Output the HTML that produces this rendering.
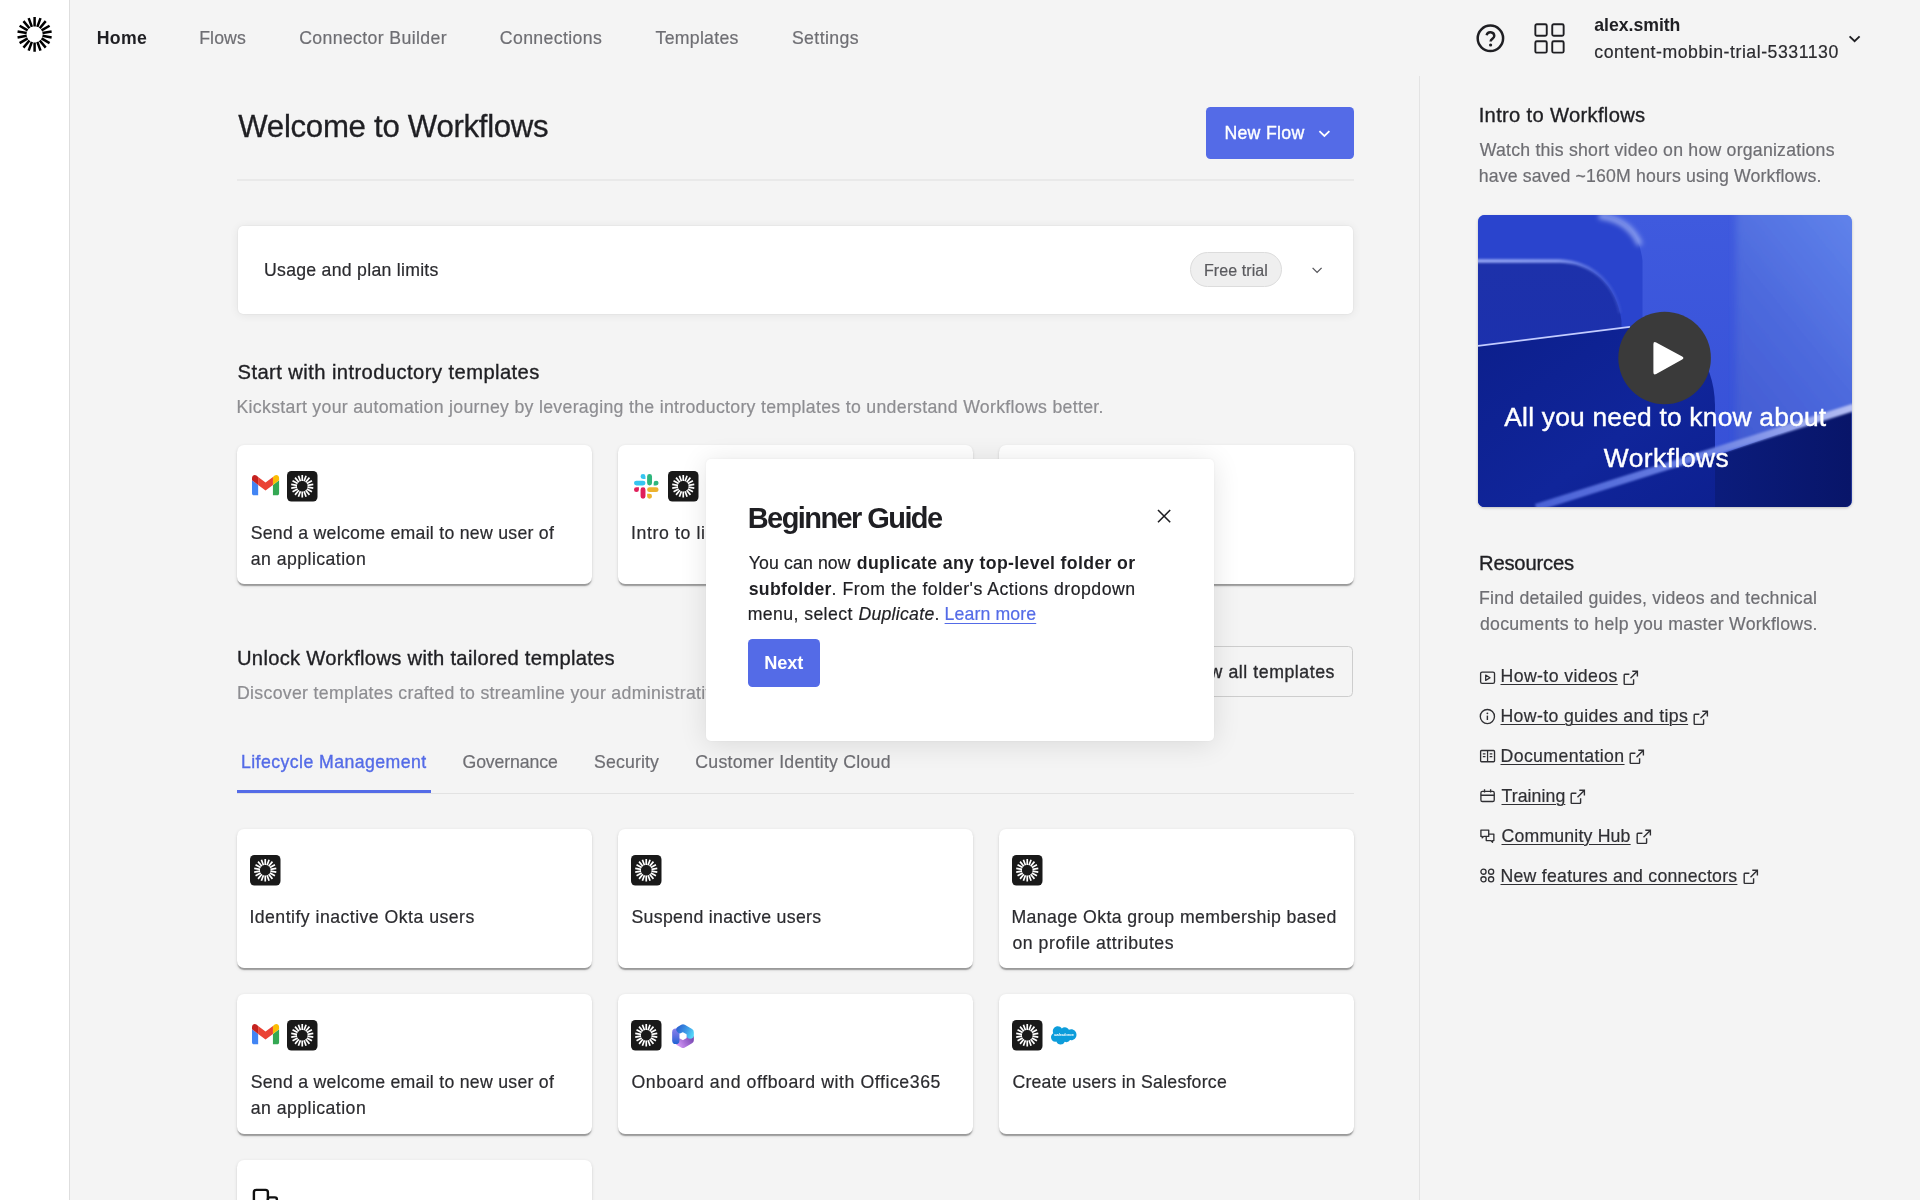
<!DOCTYPE html>
<html lang="en"><head><meta charset="utf-8"><title>Workflows</title>
<style>
*{box-sizing:border-box}html,body{margin:0;padding:0}
body{width:1920px;height:1200px;overflow:hidden;background:#f4f4f4;font-family:"Liberation Sans", sans-serif;position:relative}
.t{position:absolute;white-space:nowrap;line-height:1;display:block}
.t>i{display:inline-block;width:0;height:40px}
#root{position:absolute;left:0;top:0;width:1920px;height:1200px;overflow:hidden;will-change:transform}
.i{position:absolute;display:block;overflow:visible}
.b{position:absolute}
.card{position:absolute;background:#fff;border-radius:7.2px;box-shadow:0 2.4px 1.2px -1.2px rgba(0,0,0,.2),0 1.2px 1.2px rgba(0,0,0,.14),0 1.2px 3.6px rgba(0,0,0,.12)}
</style></head><body><div id="root">
<div class="b" style="left:0;top:0;width:70px;height:1200px;background:#fff;border-right:1.5px solid #dedede"></div>
<div class="b" style="left:1418.6px;top:76px;width:1.5px;height:1124px;background:#e3e3e3"></div>
<div class="b" style="left:237px;top:179.4px;width:1116.5px;height:2px;background:#e9e9e9"></div>
<div class="b" style="left:1205.9px;top:106.5px;width:147.7px;height:52.2px;background:#546be7;border-radius:4.5px"></div>
<div class="b" style="left:237.5px;top:225.5px;width:1115.5px;height:88.7px;background:#fff;border-radius:5px;box-shadow:0 0 1.5px rgba(0,0,0,.13),0 1px 10px rgba(0,0,0,.075)"></div>
<div class="b" style="left:1190px;top:252.1px;width:91.5px;height:35.2px;background:#efefef;border:1px solid #dcdcdc;border-radius:18px"></div>
<div class="card" style="left:236.8px;top:444.9px;width:355.2px;height:139.2px"></div>
<div class="card" style="left:236.8px;top:829.2px;width:355.2px;height:138.9px"></div>
<div class="card" style="left:236.8px;top:994.4px;width:355.2px;height:139.6px"></div>
<div class="card" style="left:617.8px;top:444.9px;width:355.2px;height:139.2px"></div>
<div class="card" style="left:617.8px;top:829.2px;width:355.2px;height:138.9px"></div>
<div class="card" style="left:617.8px;top:994.4px;width:355.2px;height:139.6px"></div>
<div class="card" style="left:998.8px;top:444.9px;width:355.2px;height:139.2px"></div>
<div class="card" style="left:998.8px;top:829.2px;width:355.2px;height:138.9px"></div>
<div class="card" style="left:998.8px;top:994.4px;width:355.2px;height:139.6px"></div>
<div class="card" style="left:236.8px;top:1160px;width:355.2px;height:120px"></div>
<div class="b" style="left:1166px;top:646.4px;width:187.4px;height:51px;border:1.3px solid #cdcdcd;border-radius:4.5px"></div>
<div class="b" style="left:237px;top:792.6px;width:1116.5px;height:1.2px;background:#e2e2e2"></div>
<div class="b" style="left:237px;top:790.4px;width:194px;height:2.8px;background:#546be7"></div>
<svg class="i" style="left:1478.4px;top:214.5px;overflow:hidden;border-radius:6.5px;box-shadow:0 1px 3px rgba(0,0,0,.22);" width="373.6" height="292.2" viewBox="0 0 373.6 292.2">
<defs>
<linearGradient id="vbg" x1="0" y1="0" x2="0" y2="1"><stop offset="0" stop-color="#3f5ade"/><stop offset="1" stop-color="#354fd6"/></linearGradient>
<linearGradient id="vr" x1="0.3" y1="1" x2="0.8" y2="0"><stop offset="0" stop-color="#3f58d0"/><stop offset="0.5" stop-color="#4c68dc"/><stop offset="1" stop-color="#5f82ea"/></linearGradient>
<linearGradient id="vin" x1="0" y1="0" x2="0" y2="1"><stop offset="0" stop-color="#1d31aa"/><stop offset="1" stop-color="#1a30b2"/></linearGradient>
<linearGradient id="vnavy" x1="0" y1="0" x2="1" y2="1"><stop offset="0" stop-color="#0c1f8c"/><stop offset="0.6" stop-color="#10259a"/><stop offset="1" stop-color="#0d2090"/></linearGradient>
<linearGradient id="vbot" x1="0" y1="0" x2="1" y2="0"><stop offset="0" stop-color="#0b1c7c"/><stop offset="1" stop-color="#081569"/></linearGradient>
<linearGradient id="vhl" gradientUnits="userSpaceOnUse" x1="0" y1="0" x2="145" y2="0"><stop offset="0" stop-color="#97a8f4"/><stop offset="0.55" stop-color="#8497ee"/><stop offset="1" stop-color="#4a62d8" stop-opacity=".3"/></linearGradient>
<linearGradient id="vband" gradientUnits="userSpaceOnUse" x1="60" y1="0" x2="374" y2="0"><stop offset="0" stop-color="#4a62d6"/><stop offset="0.55" stop-color="#6c82e4"/><stop offset="1" stop-color="#b4bef4"/></linearGradient>
<filter id="bl1" x="-20%" y="-20%" width="140%" height="140%"><feGaussianBlur stdDeviation="1.1"/></filter>
<filter id="bl2" x="-20%" y="-20%" width="140%" height="140%"><feGaussianBlur stdDeviation="2.6"/></filter>
<filter id="bl3" x="-50%" y="-5%" width="200%" height="110%"><feGaussianBlur stdDeviation="3.5"/></filter>
</defs>
<rect width="373.6" height="292.2" fill="url(#vbg)"/>
<rect x="258" y="-10" width="130" height="320" fill="url(#vr)" filter="url(#bl3)"/>
<path d="M0 0H123Q160 4 164.500 46V292.2H0Z" fill="#2a44cd"/>
<path d="M121 1Q152 5 162 30" fill="none" stroke="#8a9eee" stroke-width="6" filter="url(#bl2)"/>
<path d="M0 46.5H82C114 47.5 139 70 143.500 106V292.2H0Z" fill="url(#vin)"/>
<path d="M-4 46H82C113 47 136 67 142 98" fill="none" stroke="url(#vhl)" stroke-width="3.6" filter="url(#bl1)"/>
<path d="M0 131L150 112.300C205 106 236 140 237 190V292.2H0Z" fill="url(#vnavy)"/>
<path d="M0 130.800L152 111.800" stroke="#c3ccff" stroke-width="1.7" fill="none"/>
<path d="M237 241L373.600 194V292.2H237Z" fill="url(#vbot)"/>
<path d="M376 192.300L58 292.500" stroke="url(#vband)" stroke-width="7.5" filter="url(#bl1)" fill="none"/>
<circle cx="186.600" cy="143" r="46.300" fill="#3a3a3a"/>
<path d="M175.400 129.200Q175.400 126 178.200 127.500L204.200 141.400Q206.600 143 204.200 144.500L178.200 159Q175.400 160.400 175.400 157.200Z" fill="#fff"/>
</svg>
<div class="b" style="left:706px;top:458.8px;width:508px;height:282.2px;background:#fff;border-radius:5px;box-shadow:0 3px 28px rgba(0,0,0,.11),0 0 3px rgba(0,0,0,.05);z-index:10"></div>
<div class="b" style="left:748px;top:638.9px;width:71.6px;height:47.9px;background:#546be7;border-radius:4.5px;z-index:11"></div>
<svg class="i" style="left:14px;top:14px;" width="41" height="41" viewBox="0 0 41 41"><path d="M20.60 12.40L20.60 3.10M23.34 12.88L26.52 4.14M25.74 14.27L31.72 7.15M27.53 16.40L35.58 11.75M28.48 19.01L37.64 17.40M28.48 21.79L37.64 23.40M27.53 24.40L35.58 29.05M25.74 26.53L31.72 33.65M23.34 27.92L26.52 36.66M20.60 28.40L20.60 37.70M17.86 27.92L14.68 36.66M15.46 26.53L9.48 33.65M13.67 24.40L5.62 29.05M12.72 21.79L3.56 23.40M12.72 19.01L3.56 17.40M13.67 16.40L5.62 11.75M15.46 14.27L9.48 7.15M17.86 12.88L14.68 4.14" stroke="#000" stroke-width="2.5" fill="none"/></svg>
<svg class="i" style="left:1475px;top:22.5px;" width="31" height="31" viewBox="0 0 31 31"><circle cx="15.4" cy="15.3" r="12.7" fill="none" stroke="#1f1f23" stroke-width="2.5"/><path d="M11.6 12.3a3.9 3.9 0 0 1 7.7.6c0 2.6-3.7 3-3.7 5.6" fill="none" stroke="#1f1f23" stroke-width="2.4"/><circle cx="15.6" cy="22" r="1.6" fill="#1f1f23"/></svg>
<svg class="i" style="left:1534.4px;top:22.7px;" width="31" height="31" viewBox="0 0 31 31"><rect x="1.35" y="1.32" width="11.4" height="11.4" rx="1.5" fill="none" stroke="#1f1f23" stroke-width="1.9"/><rect x="1.35" y="18.25" width="11.4" height="11.4" rx="1.5" fill="none" stroke="#1f1f23" stroke-width="1.9"/><rect x="18.25" y="1.32" width="11.4" height="11.4" rx="1.5" fill="none" stroke="#1f1f23" stroke-width="1.9"/><rect x="18.25" y="18.25" width="11.4" height="11.4" rx="1.5" fill="none" stroke="#1f1f23" stroke-width="1.9"/></svg>
<svg class="i" style="left:1848px;top:34px;" width="14" height="10" viewBox="0 0 14 10"><path d="M1.6 2.4L6.6 7.2L11.6 2.4" fill="none" stroke="#1f1f23" stroke-width="1.9"/></svg>
<svg class="i" style="left:1318px;top:129px;z-index:2;" width="14" height="10" viewBox="0 0 14 10"><path d="M1.4 2.2L6.4 7L11.4 2.2" fill="none" stroke="#fff" stroke-width="1.8"/></svg>
<svg class="i" style="left:1311px;top:265.5px;" width="13" height="9" viewBox="0 0 13 9"><path d="M1.6 1.9L6.1 6.4L10.6 1.9" fill="none" stroke="#55555a" stroke-width="1.3"/></svg>
<svg class="i" style="left:251.5px;top:474.9px;" width="27.1" height="20.4" viewBox="52 42 88 66"><path fill="#4285f4" d="M58 108h14V74L52 59v43c0 3.32 2.69 6 6 6"/><path fill="#34a853" d="M120 108h14c3.32 0 6-2.69 6-6V59l-20 15"/><path fill="#fbbc04" d="M120 48v26l20-15v-8c0-7.42-8.47-11.65-14.4-7.2"/><path fill="#ea4335" d="M72 74V48l24 18 24-18v26L96 92"/><path fill="#c5221f" d="M52 51v8l20 15V48l-5.6-4.2c-5.94-4.45-14.4-.22-14.4 7.2"/></svg>
<svg class="i" style="left:286.9px;top:471px;" width="30.5" height="30.5" viewBox="0 0 30.5 30.5"><rect width="30.5" height="30.5" rx="4.4" fill="#191919"/><path d="M15.25 9.95L15.25 4.05M17.06 10.27L19.08 4.73M18.66 11.19L22.45 6.67M19.84 12.60L24.95 9.65M20.47 14.33L26.28 13.31M20.47 16.17L26.28 17.19M19.84 17.90L24.95 20.85M18.66 19.31L22.45 23.83M17.06 20.23L19.08 25.77M15.25 20.55L15.25 26.45M13.44 20.23L11.42 25.77M11.84 19.31L8.05 23.83M10.66 17.90L5.55 20.85M10.03 16.17L4.22 17.19M10.03 14.33L4.22 13.31M10.66 12.60L5.55 9.65M11.84 11.19L8.05 6.67M13.44 10.27L11.42 4.73" stroke="#fff" stroke-width="1.7" fill="none"/></svg>
<svg class="i" style="left:633.8px;top:473.9px;" width="24.7" height="24.7" viewBox="0 0 54 54"><path d="M19.712.133a5.381 5.381 0 0 0-5.376 5.387 5.381 5.381 0 0 0 5.376 5.386h5.376V5.52A5.381 5.381 0 0 0 19.712.133m0 14.365H5.376A5.381 5.381 0 0 0 0 19.884a5.381 5.381 0 0 0 5.376 5.387h14.336a5.381 5.381 0 0 0 5.376-5.387 5.381 5.381 0 0 0-5.376-5.386" fill="#36C5F0"/><path d="M53.76 19.884a5.381 5.381 0 0 0-5.376-5.386 5.381 5.381 0 0 0-5.376 5.386v5.387h5.376a5.381 5.381 0 0 0 5.376-5.387m-14.336 0V5.52A5.381 5.381 0 0 0 34.048.133a5.381 5.381 0 0 0-5.376 5.387v14.364a5.381 5.381 0 0 0 5.376 5.387 5.381 5.381 0 0 0 5.376-5.387" fill="#2EB67D"/><path d="M34.048 54a5.381 5.381 0 0 0 5.376-5.387 5.381 5.381 0 0 0-5.376-5.386h-5.376v5.386A5.381 5.381 0 0 0 34.048 54m0-14.365h14.336a5.381 5.381 0 0 0 5.376-5.386 5.381 5.381 0 0 0-5.376-5.387H34.048a5.381 5.381 0 0 0-5.376 5.387 5.381 5.381 0 0 0 5.376 5.386" fill="#ECB22E"/><path d="M0 34.249a5.381 5.381 0 0 0 5.376 5.386 5.381 5.381 0 0 0 5.376-5.386v-5.387H5.376A5.381 5.381 0 0 0 0 34.25m14.336-.001v14.364A5.381 5.381 0 0 0 19.712 54a5.381 5.381 0 0 0 5.376-5.387V34.25a5.381 5.381 0 0 0-5.376-5.387 5.381 5.381 0 0 0-5.376 5.387" fill="#E01E5A"/></svg>
<svg class="i" style="left:667.8px;top:471px;" width="30.5" height="30.5" viewBox="0 0 30.5 30.5"><rect width="30.5" height="30.5" rx="4.4" fill="#191919"/><path d="M15.25 9.95L15.25 4.05M17.06 10.27L19.08 4.73M18.66 11.19L22.45 6.67M19.84 12.60L24.95 9.65M20.47 14.33L26.28 13.31M20.47 16.17L26.28 17.19M19.84 17.90L24.95 20.85M18.66 19.31L22.45 23.83M17.06 20.23L19.08 25.77M15.25 20.55L15.25 26.45M13.44 20.23L11.42 25.77M11.84 19.31L8.05 23.83M10.66 17.90L5.55 20.85M10.03 16.17L4.22 17.19M10.03 14.33L4.22 13.31M10.66 12.60L5.55 9.65M11.84 11.19L8.05 6.67M13.44 10.27L11.42 4.73" stroke="#fff" stroke-width="1.7" fill="none"/></svg>
<svg class="i" style="left:1012px;top:471px;" width="30.5" height="30.5" viewBox="0 0 30.5 30.5"><rect width="30.5" height="30.5" rx="4.4" fill="#191919"/><path d="M15.25 9.95L15.25 4.05M17.06 10.27L19.08 4.73M18.66 11.19L22.45 6.67M19.84 12.60L24.95 9.65M20.47 14.33L26.28 13.31M20.47 16.17L26.28 17.19M19.84 17.90L24.95 20.85M18.66 19.31L22.45 23.83M17.06 20.23L19.08 25.77M15.25 20.55L15.25 26.45M13.44 20.23L11.42 25.77M11.84 19.31L8.05 23.83M10.66 17.90L5.55 20.85M10.03 16.17L4.22 17.19M10.03 14.33L4.22 13.31M10.66 12.60L5.55 9.65M11.84 11.19L8.05 6.67M13.44 10.27L11.42 4.73" stroke="#fff" stroke-width="1.7" fill="none"/></svg>
<svg class="i" style="left:250.2px;top:855.2px;" width="30.5" height="30.5" viewBox="0 0 30.5 30.5"><rect width="30.5" height="30.5" rx="4.4" fill="#191919"/><path d="M15.25 9.95L15.25 4.05M17.06 10.27L19.08 4.73M18.66 11.19L22.45 6.67M19.84 12.60L24.95 9.65M20.47 14.33L26.28 13.31M20.47 16.17L26.28 17.19M19.84 17.90L24.95 20.85M18.66 19.31L22.45 23.83M17.06 20.23L19.08 25.77M15.25 20.55L15.25 26.45M13.44 20.23L11.42 25.77M11.84 19.31L8.05 23.83M10.66 17.90L5.55 20.85M10.03 16.17L4.22 17.19M10.03 14.33L4.22 13.31M10.66 12.60L5.55 9.65M11.84 11.19L8.05 6.67M13.44 10.27L11.42 4.73" stroke="#fff" stroke-width="1.7" fill="none"/></svg>
<svg class="i" style="left:631px;top:855.2px;" width="30.5" height="30.5" viewBox="0 0 30.5 30.5"><rect width="30.5" height="30.5" rx="4.4" fill="#191919"/><path d="M15.25 9.95L15.25 4.05M17.06 10.27L19.08 4.73M18.66 11.19L22.45 6.67M19.84 12.60L24.95 9.65M20.47 14.33L26.28 13.31M20.47 16.17L26.28 17.19M19.84 17.90L24.95 20.85M18.66 19.31L22.45 23.83M17.06 20.23L19.08 25.77M15.25 20.55L15.25 26.45M13.44 20.23L11.42 25.77M11.84 19.31L8.05 23.83M10.66 17.90L5.55 20.85M10.03 16.17L4.22 17.19M10.03 14.33L4.22 13.31M10.66 12.60L5.55 9.65M11.84 11.19L8.05 6.67M13.44 10.27L11.42 4.73" stroke="#fff" stroke-width="1.7" fill="none"/></svg>
<svg class="i" style="left:1012px;top:855.2px;" width="30.5" height="30.5" viewBox="0 0 30.5 30.5"><rect width="30.5" height="30.5" rx="4.4" fill="#191919"/><path d="M15.25 9.95L15.25 4.05M17.06 10.27L19.08 4.73M18.66 11.19L22.45 6.67M19.84 12.60L24.95 9.65M20.47 14.33L26.28 13.31M20.47 16.17L26.28 17.19M19.84 17.90L24.95 20.85M18.66 19.31L22.45 23.83M17.06 20.23L19.08 25.77M15.25 20.55L15.25 26.45M13.44 20.23L11.42 25.77M11.84 19.31L8.05 23.83M10.66 17.90L5.55 20.85M10.03 16.17L4.22 17.19M10.03 14.33L4.22 13.31M10.66 12.60L5.55 9.65M11.84 11.19L8.05 6.67M13.44 10.27L11.42 4.73" stroke="#fff" stroke-width="1.7" fill="none"/></svg>
<svg class="i" style="left:251.5px;top:1024.4px;" width="27.1" height="20.4" viewBox="52 42 88 66"><path fill="#4285f4" d="M58 108h14V74L52 59v43c0 3.32 2.69 6 6 6"/><path fill="#34a853" d="M120 108h14c3.32 0 6-2.69 6-6V59l-20 15"/><path fill="#fbbc04" d="M120 48v26l20-15v-8c0-7.42-8.47-11.65-14.4-7.2"/><path fill="#ea4335" d="M72 74V48l24 18 24-18v26L96 92"/><path fill="#c5221f" d="M52 51v8l20 15V48l-5.6-4.2c-5.94-4.45-14.4-.22-14.4 7.2"/></svg>
<svg class="i" style="left:286.9px;top:1020.2px;" width="30.5" height="30.5" viewBox="0 0 30.5 30.5"><rect width="30.5" height="30.5" rx="4.4" fill="#191919"/><path d="M15.25 9.95L15.25 4.05M17.06 10.27L19.08 4.73M18.66 11.19L22.45 6.67M19.84 12.60L24.95 9.65M20.47 14.33L26.28 13.31M20.47 16.17L26.28 17.19M19.84 17.90L24.95 20.85M18.66 19.31L22.45 23.83M17.06 20.23L19.08 25.77M15.25 20.55L15.25 26.45M13.44 20.23L11.42 25.77M11.84 19.31L8.05 23.83M10.66 17.90L5.55 20.85M10.03 16.17L4.22 17.19M10.03 14.33L4.22 13.31M10.66 12.60L5.55 9.65M11.84 11.19L8.05 6.67M13.44 10.27L11.42 4.73" stroke="#fff" stroke-width="1.7" fill="none"/></svg>
<svg class="i" style="left:631.2px;top:1020.2px;" width="30.5" height="30.5" viewBox="0 0 30.5 30.5"><rect width="30.5" height="30.5" rx="4.4" fill="#191919"/><path d="M15.25 9.95L15.25 4.05M17.06 10.27L19.08 4.73M18.66 11.19L22.45 6.67M19.84 12.60L24.95 9.65M20.47 14.33L26.28 13.31M20.47 16.17L26.28 17.19M19.84 17.90L24.95 20.85M18.66 19.31L22.45 23.83M17.06 20.23L19.08 25.77M15.25 20.55L15.25 26.45M13.44 20.23L11.42 25.77M11.84 19.31L8.05 23.83M10.66 17.90L5.55 20.85M10.03 16.17L4.22 17.19M10.03 14.33L4.22 13.31M10.66 12.60L5.55 9.65M11.84 11.19L8.05 6.67M13.44 10.27L11.42 4.73" stroke="#fff" stroke-width="1.7" fill="none"/></svg>
<svg class="i" style="left:672.1px;top:1023.8px;" width="22" height="24.4" viewBox="0 0 22 24.4"><defs><linearGradient id="m1" gradientUnits="userSpaceOnUse" x1="0" y1="4" x2="0" y2="20"><stop offset="0" stop-color="#8f80ea"/><stop offset="0.55" stop-color="#5a6fe0"/><stop offset="1" stop-color="#1f63d2"/></linearGradient><linearGradient id="m2" gradientUnits="userSpaceOnUse" x1="5" y1="3" x2="21" y2="11"><stop offset="0" stop-color="#2a5fd0"/><stop offset="0.6" stop-color="#3f9fe8"/><stop offset="1" stop-color="#55d6f8"/></linearGradient><linearGradient id="m3" gradientUnits="userSpaceOnUse" x1="21" y1="13" x2="7" y2="22"><stop offset="0" stop-color="#7446ae"/><stop offset="0.6" stop-color="#a96fd8"/><stop offset="1" stop-color="#cf95f2"/></linearGradient></defs>
<g fill="none" stroke-width="7.3" stroke-linecap="round" stroke-linejoin="round"><path d="M18.2 13.8V16.2L11 20.4L7 18.1" stroke="url(#m3)"/><path d="M3.8 8.2V16.4" stroke="url(#m1)"/><path d="M8 5.6L11 4L18.2 8.2V11" stroke="url(#m2)"/></g></svg>
<svg class="i" style="left:1012px;top:1020.2px;" width="30.5" height="30.5" viewBox="0 0 30.5 30.5"><rect width="30.5" height="30.5" rx="4.4" fill="#191919"/><path d="M15.25 9.95L15.25 4.05M17.06 10.27L19.08 4.73M18.66 11.19L22.45 6.67M19.84 12.60L24.95 9.65M20.47 14.33L26.28 13.31M20.47 16.17L26.28 17.19M19.84 17.90L24.95 20.85M18.66 19.31L22.45 23.83M17.06 20.23L19.08 25.77M15.25 20.55L15.25 26.45M13.44 20.23L11.42 25.77M11.84 19.31L8.05 23.83M10.66 17.90L5.55 20.85M10.03 16.17L4.22 17.19M10.03 14.33L4.22 13.31M10.66 12.60L5.55 9.65M11.84 11.19L8.05 6.67M13.44 10.27L11.42 4.73" stroke="#fff" stroke-width="1.7" fill="none"/></svg>
<svg class="i" style="left:1051.3px;top:1026.4px;" width="25.5" height="18" viewBox="0 0 25.5 18"><path d="M10.6 2.1a4.5 4.5 0 0 1 3.3-1.4c1.7 0 3.2.95 4 2.35a5.4 5.4 0 0 1 2.2-.47c3 0 5.4 2.45 5.4 5.5s-2.4 5.5-5.4 5.5c-.37 0-.72-.04-1.07-.1a4 4 0 0 1-3.5 2.05c-.62 0-1.2-.14-1.73-.4a4.5 4.5 0 0 1-4.2 2.8 4.5 4.5 0 0 1-4.25-2.95 4.2 4.2 0 0 1-.86.09C2 15.1 0 13.05 0 10.55c0-1.7.9-3.15 2.25-3.95a5.2 5.2 0 0 1-.43-2.07C1.820 1.8 4.05-.4 6.800-.4c1.600 0 3.050.77 3.950 1.960z" fill="#0d9ddb" transform="translate(0,0.6)"/><text x="12.9" y="10.3" font-family="Liberation Sans, sans-serif" font-style="italic" font-weight="700" font-size="4.3" fill="#fff" text-anchor="middle" letter-spacing="-0.15">salesforce</text></svg>
<svg class="i" style="left:251px;top:1187px;" width="30" height="16" viewBox="0 0 30 16"><rect x="2.9" y="2.9" width="14" height="16" rx="2.4" fill="none" stroke="#111" stroke-width="2.4"/><rect x="16.9" y="10.4" width="9" height="12" rx="2" fill="#fff" stroke="#111" stroke-width="2.4"/></svg>
<svg class="i" style="left:1478.8px;top:669.6px;" width="17.15" height="17.15" viewBox="0 0 18 18"><rect x="1.7" y="2.2" width="14.6" height="11.8" rx="1.6" fill="none" stroke="#2f2f33" stroke-width="1.4"/><path d="M7 5.3v5.6l4.6-2.8z" fill="none" stroke="#2f2f33" stroke-width="1.3" stroke-linejoin="round"/></svg>
<svg class="i" style="left:1478.8px;top:707.6px;" width="17.15" height="17.15" viewBox="0 0 18 18"><circle cx="8.8" cy="9" r="7.45" fill="none" stroke="#2f2f33" stroke-width="1.4"/><path d="M8.8 8v4.6" stroke="#2f2f33" stroke-width="1.5"/><circle cx="8.8" cy="5.6" r="1" fill="#2f2f33"/></svg>
<svg class="i" style="left:1478.8px;top:748.4px;" width="17.15" height="17.15" viewBox="0 0 18 18"><rect x="1.7" y="2.6" width="14.6" height="11.8" rx="1" fill="none" stroke="#2f2f33" stroke-width="1.4"/><path d="M9 2.6v11.8M4 6.2h2.8M4 9h2.8M11.2 6.2H14M11.2 9H14" stroke="#2f2f33" stroke-width="1.3" fill="none"/></svg>
<svg class="i" style="left:1478.8px;top:788.3px;" width="17.15" height="17.15" viewBox="0 0 18 18"><rect x="2" y="3.6" width="14" height="10.6" rx="1.6" fill="none" stroke="#2f2f33" stroke-width="1.4"/><path d="M2 7.6h14M5.8 1.2v3.4M12.2 1.2v3.4" stroke="#2f2f33" stroke-width="1.4" fill="none"/></svg>
<svg class="i" style="left:1478.8px;top:827.6px;" width="17.15" height="17.15" viewBox="0 0 18 18"><path d="M2 2.2h8.2v6.6H5l-1.6 1.6V8.8H2z" fill="none" stroke="#2f2f33" stroke-width="1.4" stroke-linejoin="round"/><path d="M10.4 6.4h5.2v6.8h-1.4v1.8l-1.8-1.8H7.6V9" fill="none" stroke="#2f2f33" stroke-width="1.4" stroke-linejoin="round"/></svg>
<svg class="i" style="left:1478.8px;top:867.3px;" width="17.15" height="17.15" viewBox="0 0 18 18"><circle cx="4.7" cy="4.9" r="2.7" fill="none" stroke="#2f2f33" stroke-width="1.4"/><circle cx="12.7" cy="4.9" r="2.7" fill="none" stroke="#2f2f33" stroke-width="1.4"/><circle cx="4.7" cy="12.9" r="2.7" fill="none" stroke="#2f2f33" stroke-width="1.4"/><circle cx="12.7" cy="12.9" r="2.7" fill="none" stroke="#2f2f33" stroke-width="1.4"/></svg>
<svg class="i" style="left:1623.0px;top:669.5px;" width="15.4" height="15.6" viewBox="0 0 15.4 15.6"><path d="M6.4 4.3H1.8a.6.6 0 0 0-.6.6v8.900a.6.6 0 0 0 .6.6h8.200a.6.6 0 0 0 .6-.6V9.300" fill="none" stroke="#2f2f33" stroke-width="1.4"/><path d="M9.300 1.300h5.100v5.100M14.200 1.500L7.500 8.200" fill="none" stroke="#2f2f33" stroke-width="1.4"/></svg>
<svg class="i" style="left:1693.4px;top:709.5px;" width="15.4" height="15.6" viewBox="0 0 15.4 15.6"><path d="M6.4 4.3H1.8a.6.6 0 0 0-.6.6v8.900a.6.6 0 0 0 .6.6h8.200a.6.6 0 0 0 .6-.6V9.300" fill="none" stroke="#2f2f33" stroke-width="1.4"/><path d="M9.300 1.300h5.100v5.100M14.200 1.500L7.500 8.200" fill="none" stroke="#2f2f33" stroke-width="1.4"/></svg>
<svg class="i" style="left:1628.8px;top:749.3000000000001px;" width="15.4" height="15.6" viewBox="0 0 15.4 15.6"><path d="M6.4 4.3H1.8a.6.6 0 0 0-.6.6v8.900a.6.6 0 0 0 .6.6h8.200a.6.6 0 0 0 .6-.6V9.300" fill="none" stroke="#2f2f33" stroke-width="1.4"/><path d="M9.300 1.300h5.100v5.100M14.200 1.500L7.500 8.200" fill="none" stroke="#2f2f33" stroke-width="1.4"/></svg>
<svg class="i" style="left:1569.9px;top:789.3000000000001px;" width="15.4" height="15.6" viewBox="0 0 15.4 15.6"><path d="M6.4 4.3H1.8a.6.6 0 0 0-.6.6v8.900a.6.6 0 0 0 .6.6h8.200a.6.6 0 0 0 .6-.6V9.300" fill="none" stroke="#2f2f33" stroke-width="1.4"/><path d="M9.300 1.300h5.100v5.100M14.200 1.500L7.500 8.200" fill="none" stroke="#2f2f33" stroke-width="1.4"/></svg>
<svg class="i" style="left:1636.1px;top:829.1px;" width="15.4" height="15.6" viewBox="0 0 15.4 15.6"><path d="M6.4 4.3H1.8a.6.6 0 0 0-.6.6v8.900a.6.6 0 0 0 .6.6h8.200a.6.6 0 0 0 .6-.6V9.300" fill="none" stroke="#2f2f33" stroke-width="1.4"/><path d="M9.300 1.300h5.100v5.100M14.200 1.500L7.500 8.200" fill="none" stroke="#2f2f33" stroke-width="1.4"/></svg>
<svg class="i" style="left:1742.8px;top:868.7px;" width="15.4" height="15.6" viewBox="0 0 15.4 15.6"><path d="M6.4 4.3H1.8a.6.6 0 0 0-.6.6v8.900a.6.6 0 0 0 .6.6h8.200a.6.6 0 0 0 .6-.6V9.300" fill="none" stroke="#2f2f33" stroke-width="1.4"/><path d="M9.300 1.300h5.100v5.100M14.200 1.500L7.500 8.200" fill="none" stroke="#2f2f33" stroke-width="1.4"/></svg>
<svg class="i" style="left:1156px;top:507.5px;z-index:12;" width="16" height="16" viewBox="0 0 16 16"><path d="M2 2L14.2 14.2M14.2 2L2 14.2" stroke="#1f1f23" stroke-width="1.6" fill="none"/></svg>
<span class="t" style="left:96.70px;top:4.00px;font-size:17.7px;letter-spacing:0.332px;color:#1f1f23;font-weight:700;"><i></i>Home</span>
<span class="t" style="left:199.20px;top:4.00px;font-size:17.7px;letter-spacing:0.114px;color:#6e6e73;-webkit-text-stroke:0.2px #6e6e73;"><i></i>Flows</span>
<span class="t" style="left:299.20px;top:4.00px;font-size:17.7px;letter-spacing:0.363px;color:#6e6e73;-webkit-text-stroke:0.2px #6e6e73;"><i></i>Connector Builder</span>
<span class="t" style="left:499.80px;top:4.00px;font-size:17.7px;letter-spacing:0.372px;color:#6e6e73;-webkit-text-stroke:0.2px #6e6e73;"><i></i>Connections</span>
<span class="t" style="left:655.60px;top:4.00px;font-size:17.7px;letter-spacing:0.267px;color:#6e6e73;-webkit-text-stroke:0.2px #6e6e73;"><i></i>Templates</span>
<span class="t" style="left:791.90px;top:4.00px;font-size:17.7px;letter-spacing:0.405px;color:#6e6e73;-webkit-text-stroke:0.2px #6e6e73;"><i></i>Settings</span>
<span class="t" style="left:1594.30px;top:-8.70px;font-size:17.7px;letter-spacing:-0.045px;color:#1f1f23;font-weight:700;"><i></i>alex.smith</span>
<span class="t" style="left:1594.30px;top:17.70px;font-size:17.7px;letter-spacing:0.529px;color:#2b2b2f;-webkit-text-stroke:0.2px #2b2b2f;"><i></i>content-mobbin-trial-5331130</span>
<span class="t" style="left:238.30px;top:97.10px;font-size:31.2px;letter-spacing:-0.295px;color:#1f1f23;-webkit-text-stroke:0.3px #1f1f23;"><i></i>Welcome to Workflows</span>
<span class="t" style="left:1224.40px;top:99.00px;font-size:17.7px;letter-spacing:0.304px;color:#fff;-webkit-text-stroke:0.35px #fff;"><i></i>New Flow</span>
<span class="t" style="left:264.00px;top:236.00px;font-size:17.7px;letter-spacing:0.262px;color:#2b2b2f;-webkit-text-stroke:0.2px #2b2b2f;"><i></i>Usage and plan limits</span>
<span class="t" style="left:1204.00px;top:235.60px;font-size:16px;letter-spacing:0.076px;color:#5a5a5e;-webkit-text-stroke:0.2px #5a5a5e;"><i></i>Free trial</span>
<span class="t" style="left:237.50px;top:338.50px;font-size:20.2px;letter-spacing:0.422px;color:#1f1f23;-webkit-text-stroke:0.35px #1f1f23;"><i></i>Start with introductory templates</span>
<span class="t" style="left:236.50px;top:372.50px;font-size:17.7px;letter-spacing:0.310px;color:#8d8d91;-webkit-text-stroke:0.2px #8d8d91;"><i></i>Kickstart your automation journey by leveraging the introductory templates to understand Workflows better.</span>
<span class="t" style="left:250.70px;top:498.90px;font-size:17.7px;letter-spacing:0.272px;color:#2b2b2f;-webkit-text-stroke:0.2px #2b2b2f;"><i></i>Send a welcome email to new user of</span>
<span class="t" style="left:250.70px;top:525.00px;font-size:17.7px;letter-spacing:0.452px;color:#2b2b2f;-webkit-text-stroke:0.2px #2b2b2f;"><i></i>an application</span>
<span class="t" style="left:630.90px;top:498.90px;font-size:17.7px;letter-spacing:0.620px;color:#2b2b2f;-webkit-text-stroke:0.2px #2b2b2f;"><i></i>Intro to list functions</span>
<span class="t" style="left:1011.40px;top:498.90px;font-size:17.7px;letter-spacing:0.105px;color:#2b2b2f;-webkit-text-stroke:0.2px #2b2b2f;"><i></i>Intro to branching</span>
<span class="t" style="left:237.00px;top:625.00px;font-size:20.2px;letter-spacing:0.287px;color:#1f1f23;-webkit-text-stroke:0.35px #1f1f23;"><i></i>Unlock Workflows with tailored templates</span>
<span class="t" style="left:237.00px;top:658.80px;font-size:17.7px;letter-spacing:0.316px;color:#8d8d91;-webkit-text-stroke:0.2px #8d8d91;"><i></i>Discover templates crafted to streamline your administrative tasks with ease.</span>
<span class="t" style="left:1182.66px;top:638.10px;font-size:17.7px;letter-spacing:0.563px;color:#2b2b2f;-webkit-text-stroke:0.35px #2b2b2f;"><i></i>View all templates</span>
<span class="t" style="left:240.90px;top:727.80px;font-size:17.7px;letter-spacing:0.439px;color:#546be7;-webkit-text-stroke:0.35px #546be7;"><i></i>Lifecycle Management</span>
<span class="t" style="left:462.50px;top:727.80px;font-size:17.7px;letter-spacing:-0.113px;color:#6e6e73;-webkit-text-stroke:0.2px #6e6e73;"><i></i>Governance</span>
<span class="t" style="left:594.00px;top:727.80px;font-size:17.7px;letter-spacing:0.150px;color:#6e6e73;-webkit-text-stroke:0.2px #6e6e73;"><i></i>Security</span>
<span class="t" style="left:695.30px;top:727.80px;font-size:17.7px;letter-spacing:0.250px;color:#6e6e73;-webkit-text-stroke:0.2px #6e6e73;"><i></i>Customer Identity Cloud</span>
<span class="t" style="left:249.40px;top:882.70px;font-size:17.7px;letter-spacing:0.463px;color:#2b2b2f;-webkit-text-stroke:0.2px #2b2b2f;"><i></i>Identify inactive Okta users</span>
<span class="t" style="left:631.50px;top:882.70px;font-size:17.7px;letter-spacing:0.320px;color:#2b2b2f;-webkit-text-stroke:0.2px #2b2b2f;"><i></i>Suspend inactive users</span>
<span class="t" style="left:1011.40px;top:882.70px;font-size:17.7px;letter-spacing:0.405px;color:#2b2b2f;-webkit-text-stroke:0.2px #2b2b2f;"><i></i>Manage Okta group membership based</span>
<span class="t" style="left:1012.40px;top:908.70px;font-size:17.7px;letter-spacing:0.538px;color:#2b2b2f;-webkit-text-stroke:0.2px #2b2b2f;"><i></i>on profile attributes</span>
<span class="t" style="left:250.70px;top:1048.40px;font-size:17.7px;letter-spacing:0.272px;color:#2b2b2f;-webkit-text-stroke:0.2px #2b2b2f;"><i></i>Send a welcome email to new user of</span>
<span class="t" style="left:250.70px;top:1074.40px;font-size:17.7px;letter-spacing:0.452px;color:#2b2b2f;-webkit-text-stroke:0.2px #2b2b2f;"><i></i>an application</span>
<span class="t" style="left:631.50px;top:1048.40px;font-size:17.7px;letter-spacing:0.574px;color:#2b2b2f;-webkit-text-stroke:0.2px #2b2b2f;"><i></i>Onboard and offboard with Office365</span>
<span class="t" style="left:1012.40px;top:1048.40px;font-size:17.7px;letter-spacing:0.237px;color:#2b2b2f;-webkit-text-stroke:0.2px #2b2b2f;"><i></i>Create users in Salesforce</span>
<span class="t" style="left:1478.70px;top:81.90px;font-size:20.2px;letter-spacing:0.313px;color:#1f1f23;-webkit-text-stroke:0.35px #1f1f23;"><i></i>Intro to Workflows</span>
<span class="t" style="left:1479.70px;top:115.60px;font-size:17.7px;letter-spacing:0.224px;color:#6e6e73;-webkit-text-stroke:0.2px #6e6e73;"><i></i>Watch this short video on how organizations</span>
<span class="t" style="left:1478.70px;top:141.90px;font-size:17.7px;letter-spacing:0.140px;color:#6e6e73;-webkit-text-stroke:0.2px #6e6e73;"><i></i>have saved ~160M hours using Workflows.</span>
<span class="t" style="left:1504.30px;top:386.40px;font-size:26.4px;letter-spacing:0.197px;color:#fff;-webkit-text-stroke:0.4px #fff;z-index:3;"><i></i>All you need to know about</span>
<span class="t" style="left:1603.80px;top:426.80px;font-size:26.4px;letter-spacing:0.472px;color:#fff;-webkit-text-stroke:0.4px #fff;z-index:3;"><i></i>Workflows</span>
<span class="t" style="left:1479.00px;top:530.20px;font-size:20.2px;letter-spacing:-0.175px;color:#1f1f23;-webkit-text-stroke:0.35px #1f1f23;"><i></i>Resources</span>
<span class="t" style="left:1479.00px;top:564.00px;font-size:17.7px;letter-spacing:0.232px;color:#6e6e73;-webkit-text-stroke:0.2px #6e6e73;"><i></i>Find detailed guides, videos and technical</span>
<span class="t" style="left:1480.00px;top:590.40px;font-size:17.7px;letter-spacing:0.247px;color:#6e6e73;-webkit-text-stroke:0.2px #6e6e73;"><i></i>documents to help you master Workflows.</span>
<span class="t" style="left:1500.50px;top:642.30px;font-size:17.7px;letter-spacing:0.398px;color:#2f2f33;-webkit-text-stroke:0.2px #2f2f33;text-decoration:underline;text-decoration-thickness:1.4px;text-underline-offset:2px;"><i></i>How-to videos</span>
<span class="t" style="left:1500.50px;top:682.30px;font-size:17.7px;letter-spacing:0.349px;color:#2f2f33;-webkit-text-stroke:0.2px #2f2f33;text-decoration:underline;text-decoration-thickness:1.4px;text-underline-offset:2px;"><i></i>How-to guides and tips</span>
<span class="t" style="left:1500.50px;top:722.10px;font-size:17.7px;letter-spacing:0.389px;color:#2f2f33;-webkit-text-stroke:0.2px #2f2f33;text-decoration:underline;text-decoration-thickness:1.4px;text-underline-offset:2px;"><i></i>Documentation</span>
<span class="t" style="left:1501.50px;top:762.10px;font-size:17.7px;letter-spacing:0.070px;color:#2f2f33;-webkit-text-stroke:0.2px #2f2f33;text-decoration:underline;text-decoration-thickness:1.4px;text-underline-offset:2px;"><i></i>Training</span>
<span class="t" style="left:1501.50px;top:801.90px;font-size:17.7px;letter-spacing:0.178px;color:#2f2f33;-webkit-text-stroke:0.2px #2f2f33;text-decoration:underline;text-decoration-thickness:1.4px;text-underline-offset:2px;"><i></i>Community Hub</span>
<span class="t" style="left:1500.50px;top:841.50px;font-size:17.7px;letter-spacing:0.253px;color:#2f2f33;-webkit-text-stroke:0.2px #2f2f33;text-decoration:underline;text-decoration-thickness:1.4px;text-underline-offset:2px;"><i></i>New features and connectors</span>
<span class="t" style="left:747.75px;top:488.20px;font-size:29px;letter-spacing:-1.580px;color:#1f1f23;font-weight:700;z-index:12;"><i></i>Beginner Guide</span>
<span class="t" style="left:748.75px;top:529.30px;font-size:17.7px;letter-spacing:0.118px;color:#1f1f23;-webkit-text-stroke:0.2px #1f1f23;z-index:12;"><i></i>You can now</span>
<span class="t" style="left:856.80px;top:529.30px;font-size:17.7px;letter-spacing:0.342px;color:#1f1f23;font-weight:700;z-index:12;"><i></i>duplicate any top-level folder or</span>
<span class="t" style="left:748.75px;top:554.60px;font-size:17.7px;letter-spacing:0.269px;color:#1f1f23;font-weight:700;z-index:12;"><i></i>subfolder</span>
<span class="t" style="left:831.60px;top:554.60px;font-size:17.7px;letter-spacing:0.484px;color:#1f1f23;-webkit-text-stroke:0.2px #1f1f23;z-index:12;"><i></i>. From the folder's Actions dropdown</span>
<span class="t" style="left:747.75px;top:580.10px;font-size:17.7px;letter-spacing:0.390px;color:#1f1f23;-webkit-text-stroke:0.2px #1f1f23;z-index:12;"><i></i>menu, select</span>
<span class="t" style="left:858.40px;top:580.10px;font-size:17.7px;letter-spacing:0.262px;color:#1f1f23;font-style:italic;-webkit-text-stroke:0.2px #1f1f23;z-index:12;"><i></i>Duplicate</span>
<span class="t" style="left:934.60px;top:580.10px;font-size:17.7px;letter-spacing:0.000px;color:#1f1f23;-webkit-text-stroke:0.2px #1f1f23;z-index:12;"><i></i>.</span>
<span class="t" style="left:944.60px;top:580.10px;font-size:17.7px;letter-spacing:0.115px;color:#546be7;-webkit-text-stroke:0.2px #546be7;z-index:12;text-decoration:underline;text-decoration-thickness:1.3px;text-underline-offset:2.5px;"><i></i>Learn more</span>
<span class="t" style="left:764.20px;top:629.30px;font-size:18.2px;letter-spacing:-0.121px;color:#fff;font-weight:700;z-index:12;"><i></i>Next</span>
</div></body></html>
